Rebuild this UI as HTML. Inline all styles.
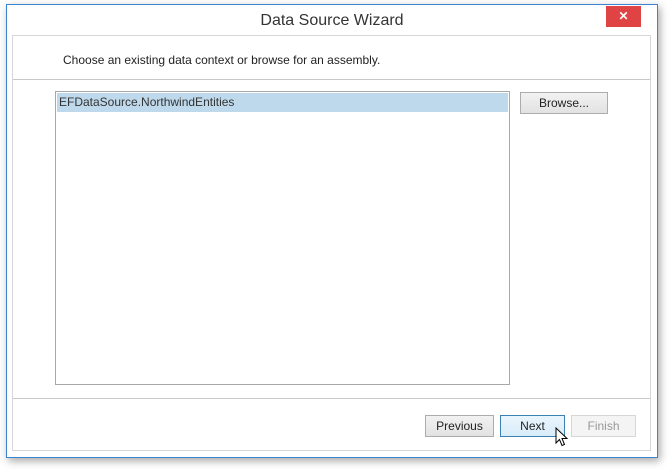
<!DOCTYPE html>
<html><head><style>
body{margin:0;width:670px;height:470px;background:#fff;font-family:"Liberation Sans",sans-serif;position:relative;overflow:hidden}
.win{position:absolute;left:6px;top:4px;width:650px;height:452px;background:#fff;border:1px solid #3c84d0;box-shadow:2px 3px 8px rgba(0,0,0,.35)}
.title{position:absolute;left:0;right:0;top:7px;text-align:center;font-size:16px;color:#333}
.close{position:absolute;left:599px;top:1px;width:35px;height:21px;background:#e04343;color:#fff;font-size:12px;font-weight:bold;text-align:center;line-height:20px}
.panel{position:absolute;left:5px;top:30px;width:637px;height:414px;border:1px solid #d6d6d6;background:#fff}
.hl{position:absolute;left:0;right:0;height:1px;background:#c8c8c8}
.txt{position:absolute;font-size:12px;color:#222}
.list{position:absolute;left:42px;top:55px;width:453px;height:292px;border:1px solid #a8a8a8}
.sel{position:absolute;left:1px;top:1px;right:1px;height:19px;background:#bfd9ec;font-size:12px;line-height:19px;padding-left:2px;color:#333}
.btn{position:absolute;height:20px;border:1px solid #acacac;background:linear-gradient(#f2f2f2,#e2e2e2);font-size:12px;text-align:center;line-height:20px;color:#222}
</style></head><body>
<div class="win">
<div class="title">Data Source Wizard</div>
<div class="close">✕</div>
<div class="panel">
<div class="txt" style="left:50px;top:17px">Choose an existing data context or browse for an assembly.</div>
<div class="hl" style="top:43px"></div>
<div class="list"><div class="sel">EFDataSource.NorthwindEntities</div></div>
<div class="btn" style="left:507px;top:56px;width:86px">Browse...</div>
<div class="hl" style="top:362px"></div>
<div class="btn" style="left:412px;top:379px;width:67px">Previous</div>
<div class="btn" style="left:487px;top:379px;width:63px;border-color:#3c7fb1;background:linear-gradient(#eaf5fc,#d8ecfa)">Next</div>
<div class="btn" style="left:558px;top:379px;width:63px;color:#999;border-color:#d6d6d6;background:#f4f4f4">Finish</div>
<svg style="position:absolute;left:542px;top:391px" width="14" height="20" viewBox="0 0 14 20"><path d="M1 1V16L4.5 12.5L7 18.5L9.5 17.5L7 11.5H12Z" fill="#fff" stroke="#000" stroke-width="1"/></svg>
</div>
</div>
</body></html>
